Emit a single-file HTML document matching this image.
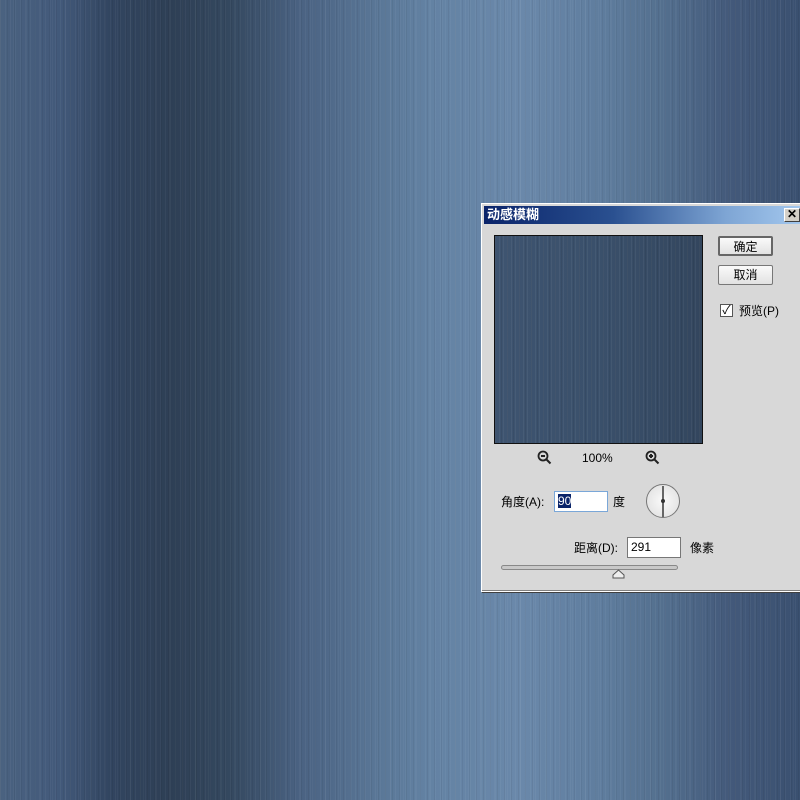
<!DOCTYPE html>
<html><head><meta charset="utf-8"><style>
*{margin:0;padding:0;box-sizing:border-box}
body{width:800px;height:800px;overflow:hidden;position:relative;font-family:"Liberation Sans","Noto Sans CJK SC",sans-serif;font-size:12px;
background:
repeating-linear-gradient(90deg,rgba(255,255,255,0.04) 0 1px,transparent 1px 5px),
repeating-linear-gradient(90deg,rgba(0,0,0,0.05) 0 1px,transparent 1px 7px),
repeating-linear-gradient(90deg,rgba(255,255,255,0.03) 0 1px,transparent 1px 13px),
linear-gradient(90deg,#4a6280 0,#42597a 60px,#324560 110px,#2e3f55 170px,#34485f 230px,#4a6282 300px,#5a7797 380px,#6382a3 430px,#6a88aa 520px,#5f7d9e 600px,#54708f 660px,#43597a 730px,#3a5070 800px);}
.dlg{position:absolute;left:481px;top:203px;width:325px;height:389px;background:#d8d8d8;border:1px solid #fff;border-right:none;box-shadow:inset -1px -1px #808080,1px 1px #404040}
.title{position:absolute;left:2px;top:2px;right:0;height:18px;background:linear-gradient(90deg,#0a246a 0,#2a5090 40%,#7ea5d4 75%,#a6caf0);color:#fff;font-weight:bold;font-size:13px;line-height:18px;padding-left:3px}
.x{position:absolute;left:302px;top:4px;width:16px;height:14px;background:#d4d0c8;border:1px solid;border-color:#fff #404040 #404040 #fff;font-size:12px;line-height:11px;text-align:center;color:#000;font-weight:bold}
.prev{position:absolute;left:12px;top:31px;width:209px;height:209px;border:1px solid #111;background:repeating-linear-gradient(90deg,rgba(255,255,255,0.05) 0 1px,transparent 1px 4px),repeating-linear-gradient(90deg,rgba(0,0,0,0.07) 0 1px,transparent 1px 6px),linear-gradient(90deg,#3e5470,#3a506b 50%,#33465e)}
.btn{position:absolute;left:236px;width:55px;height:20px;border:1px solid #777;border-radius:2px;background:linear-gradient(#fafafa,#e2e2e2);text-align:center;line-height:18px;font-size:12px}
.t{position:absolute;font-size:12px;color:#000;white-space:nowrap}
.inp{position:absolute;background:#fff;border:1px solid #777;height:21px;font-size:12px;line-height:19px;padding-left:3px}
</style></head><body>
<div class="dlg">
<div class="title">动感模糊</div>
<div class="x">✕</div>
<div class="prev"></div>
<div class="btn" style="top:32px;border:2px solid #666">确定</div>
<div class="btn" style="top:61px">取消</div>
<div style="position:absolute;left:238px;top:100px;width:13px;height:13px;border:1px solid #555;background:#fff;font-size:12px;line-height:11px;text-align:center">✓</div>
<div class="t" style="left:257px;top:98px">预览(P)</div>
<svg style="position:absolute;left:55px;top:246px" width="16" height="16"><circle cx="6" cy="6" r="4.5" fill="none" stroke="#222" stroke-width="1.8"/><path d="M4 6h4M9.5 9.5l4 4" stroke="#222" stroke-width="2"/></svg>
<div class="t" style="left:100px;top:247px">100%</div>
<svg style="position:absolute;left:163px;top:246px" width="16" height="16"><circle cx="6" cy="6" r="4.5" fill="none" stroke="#222" stroke-width="1.8"/><path d="M4 6h4M6 4v4M9.5 9.5l4 4" stroke="#222" stroke-width="2"/></svg>
<div class="t" style="left:19px;top:289px">角度(A):</div>
<div class="inp" style="left:72px;top:287px;width:54px;border-color:#7aa7d8"><span style="background:#0a246a;color:#fff">90</span></div>
<div class="t" style="left:131px;top:289px">度</div>
<div style="position:absolute;left:164px;top:280px;width:34px;height:34px;border-radius:50%;border:1px solid #777;background:radial-gradient(#fafafa,#ddd)"><div style="position:absolute;left:15px;top:1px;width:2px;height:31px;background:#666"></div><div style="position:absolute;left:14px;top:14px;width:4px;height:4px;border-radius:50%;background:#333"></div></div>
<div class="t" style="left:92px;top:335px">距离(D):</div>
<div class="inp" style="left:145px;top:333px;width:54px">291</div>
<div class="t" style="left:208px;top:335px">像素</div>
<div style="position:absolute;left:19px;top:361px;width:177px;height:5px;border:1px solid #888;border-radius:3px;background:#c8c8c8"></div>
<svg style="position:absolute;left:130px;top:365px" width="13" height="10"><path d="M1 9V6L6.5 1L12 6V9Z" fill="#eee" stroke="#555"/></svg>
</div>
</body></html>
